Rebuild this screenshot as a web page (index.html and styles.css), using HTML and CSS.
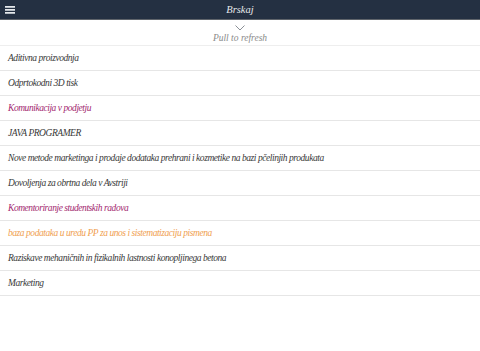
FILE: index.html
```html
<!DOCTYPE html>
<html lang="sl">
<head>
    <meta charset="UTF-8">
    <meta name="viewport" content="width=device-width, initial-scale=1.0">
    <title>Brskaj</title>
    <link rel="stylesheet" href="styles.css">
</head>
<body>
    <header class="top-bar">
        <button class="menu-btn" aria-label="Menu">
            <svg width="10" height="8" viewBox="0 0 10 8">
                <defs>
                    <linearGradient id="barGrad" x1="0" y1="0" x2="0" y2="1">
                        <stop offset="0" stop-color="#ffffff"/>
                        <stop offset="1" stop-color="#9aa3ad"/>
                    </linearGradient>
                </defs>
                <rect x="0" y="0" width="10" height="2" fill="url(#barGrad)"/>
                <rect x="0" y="3" width="10" height="2" fill="url(#barGrad)"/>
                <rect x="0" y="6" width="10" height="2" fill="url(#barGrad)"/>
            </svg>
        </button>
        <div class="top-title">Brskaj</div>
    </header>

    <div class="refresh-hint">
        <svg class="chevron" width="10" height="6" viewBox="0 0 10 6">
            <polyline points="0.5,0.5 5,5 9.5,0.5" fill="none" stroke="#8a8f96" stroke-width="1"/>
        </svg>
        <div class="refresh-text">Pull to refresh</div>
    </div>

    <ul class="item-list">
        <li class="item">Aditivna proizvodnja</li>
        <li class="item">Odprtokodni 3D tisk</li>
        <li class="item item-pink">Komunikacija v podjetju</li>
        <li class="item">JAVA PROGRAMER</li>
        <li class="item">Nove metode marketinga i prodaje dodataka prehrani i kozmetike na bazi pčelinjih produkata</li>
        <li class="item">Dovoljenja za obrtna dela v Avstriji</li>
        <li class="item item-pink">Komentoriranje studentskih radova</li>
        <li class="item item-orange">baza podataka u uredu PP za unos i sistematizaciju pismena</li>
        <li class="item">Raziskave mehaničnih in fizikalnih lastnosti konopljinega betona</li>
        <li class="item">Marketing</li>
    </ul>
</body>
</html>
```

FILE: styles.css
```css
* {
    margin: 0;
    padding: 0;
    box-sizing: border-box;
}

body {
    font-family: 'Liberation Serif', serif;
    font-style: italic;
    background: #ffffff;
    color: #383838;
    font-size: 9.5px;
    letter-spacing: -0.45px;
}

.top-bar {
    height: 20px;
    background: #243042;
    border-bottom: 1px solid #5f646b;
    display: flex;
    align-items: center;
    position: relative;
}

.menu-btn {
    background: none;
    border: none;
    padding: 0 0 0 5px;
    display: flex;
    align-items: center;
    margin-top: 1px;
}

.top-title {
    position: absolute;
    left: 0;
    right: 0;
    text-align: center;
    color: #e6e8ea;
    font-size: 10.5px;
    letter-spacing: 0;
    pointer-events: none;
}

.refresh-hint {
    height: 26px;
    display: flex;
    flex-direction: column;
    align-items: center;
    padding-top: 5px;
    border-bottom: 1px solid #eeeeee;
}

.chevron {
    display: block;
}

.refresh-text {
    color: #8a8a8a;
    margin-top: 2px;
    font-size: 9.5px;
    letter-spacing: 0;
}

.item-list {
    list-style: none;
}

.item {
    height: 25px;
    display: flex;
    align-items: center;
    padding-left: 8px;
    border-bottom: 1px solid #e6e6e6;
    white-space: nowrap;
}

.item-pink {
    color: #a3286f;
}

.item-orange {
    color: #f0a050;
}
```
